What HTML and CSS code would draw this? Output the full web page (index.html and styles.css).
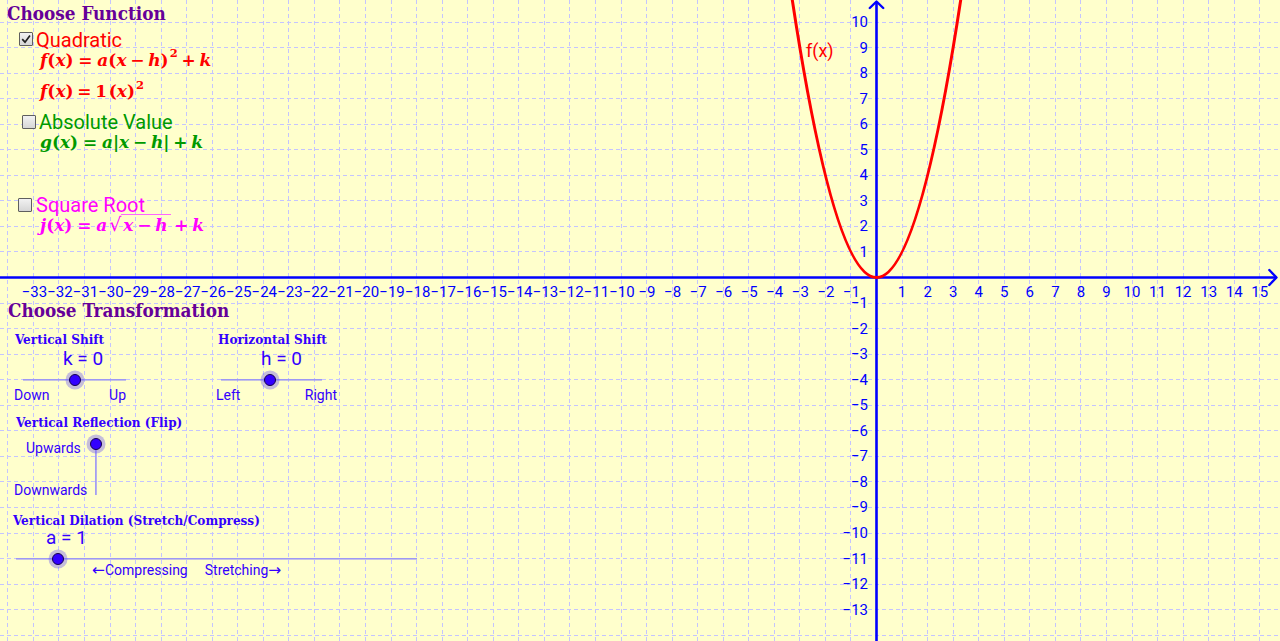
FILE: index.html
```html
<!DOCTYPE html>
<html>
<head>
<meta charset="utf-8">
<title>Transformations</title>
<link rel="stylesheet" href="styles.css">
</head>
<body>
<div class="applet">
  <svg class="graph" width="1280" height="641" viewBox="0 0 1280 641" xmlns="http://www.w3.org/2000/svg">
    <path class="grid" d="M7.8 0V641M33.35 0V641M58.9 0V641M84.45 0V641M110 0V641M135.55 0V641M161.1 0V641M186.65 0V641M212.2 0V641M237.75 0V641M263.3 0V641M288.85 0V641M314.4 0V641M339.95 0V641M365.5 0V641M391.05 0V641M416.6 0V641M442.15 0V641M467.7 0V641M493.25 0V641M518.8 0V641M544.35 0V641M569.9 0V641M595.45 0V641M621 0V641M646.55 0V641M672.1 0V641M697.65 0V641M723.2 0V641M748.75 0V641M774.3 0V641M799.85 0V641M825.4 0V641M850.95 0V641M902.05 0V641M927.6 0V641M953.15 0V641M978.7 0V641M1004.25 0V641M1029.8 0V641M1055.35 0V641M1080.9 0V641M1106.45 0V641M1132 0V641M1157.55 0V641M1183.1 0V641M1208.65 0V641M1234.2 0V641M1259.75 0V641"/>
    <path class="grid" d="M0 22H1280M0 47.55H1280M0 73.1H1280M0 98.65H1280M0 124.2H1280M0 149.75H1280M0 175.3H1280M0 200.85H1280M0 226.4H1280M0 251.95H1280M0 303.05H1280M0 328.6H1280M0 354.15H1280M0 379.7H1280M0 405.25H1280M0 430.8H1280M0 456.35H1280M0 481.9H1280M0 507.45H1280M0 533H1280M0 558.55H1280M0 584.1H1280M0 609.65H1280M0 635.2H1280"/>
    <g class="axis">
      <path d="M0 277.5H1276.5"/>
      <path d="M876.5 641V2"/>
      <path class="arrow" d="M1269.3 270L1276.5 277.5L1269.3 285"/>
      <path class="arrow" d="M869.8 8L876.5 1.5L883.2 8"/>
    </g>
    <g class="xlab">
      <text x="34.35" y="297">−33</text><text x="59.9" y="297">−32</text><text x="85.45" y="297">−31</text><text x="111" y="297">−30</text><text x="136.55" y="297">−29</text><text x="162.1" y="297">−28</text><text x="187.65" y="297">−27</text><text x="213.2" y="297">−26</text><text x="238.75" y="297">−25</text><text x="264.3" y="297">−24</text><text x="289.85" y="297">−23</text><text x="315.4" y="297">−22</text><text x="340.95" y="297">−21</text><text x="366.5" y="297">−20</text><text x="392.05" y="297">−19</text><text x="417.6" y="297">−18</text><text x="443.15" y="297">−17</text><text x="468.7" y="297">−16</text><text x="494.25" y="297">−15</text><text x="519.8" y="297">−14</text><text x="545.35" y="297">−13</text><text x="570.9" y="297">−12</text><text x="596.45" y="297">−11</text><text x="622" y="297">−10</text><text x="647.05" y="297">−9</text><text x="672.6" y="297">−8</text><text x="698.15" y="297">−7</text><text x="723.7" y="297">−6</text><text x="749.25" y="297">−5</text><text x="774.8" y="297">−4</text><text x="800.35" y="297">−3</text><text x="825.9" y="297">−2</text><text x="851.45" y="297">−1</text>
      <text x="902.05" y="297">1</text><text x="927.6" y="297">2</text><text x="953.15" y="297">3</text><text x="978.7" y="297">4</text><text x="1004.25" y="297">5</text><text x="1029.8" y="297">6</text><text x="1055.35" y="297">7</text><text x="1080.9" y="297">8</text><text x="1106.45" y="297">9</text><text x="1132" y="297">10</text><text x="1157.55" y="297">11</text><text x="1183.1" y="297">12</text><text x="1208.65" y="297">13</text><text x="1234.2" y="297">14</text><text x="1259.75" y="297">15</text>
    </g>
    <g class="ylab">
      <text x="868" y="27">10</text><text x="868" y="52.55">9</text><text x="868" y="78.1">8</text><text x="868" y="103.65">7</text><text x="868" y="129.2">6</text><text x="868" y="154.75">5</text><text x="868" y="180.3">4</text><text x="868" y="205.85">3</text><text x="868" y="231.4">2</text><text x="868" y="256.95">1</text>
      <text x="868" y="308.05">−1</text><text x="868" y="333.6">−2</text><text x="868" y="359.15">−3</text><text x="868" y="384.7">−4</text><text x="868" y="410.25">−5</text><text x="868" y="435.8">−6</text><text x="868" y="461.35">−7</text><text x="868" y="486.9">−8</text><text x="868" y="512.45">−9</text><text x="868" y="538">−10</text><text x="868" y="563.55">−11</text><text x="868" y="589.1">−12</text><text x="868" y="614.65">−13</text>
    </g>
    <path class="curve" d="M790.91 -9.2Q876.5 564.2 962.09 -9.2"/>
    <text class="curve-label" x="806" y="57">f(x)</text>
  </svg>

  <div class="panel">
    <div class="title t1">Choose Function</div>

    <div class="fn-row r-quad">
      <span class="cb"><svg width="14" height="14" viewBox="0 0 14 14"><path d="M3.2 7.2L6 10.2L11 3.4" fill="none" stroke="#222" stroke-width="1.7"/></svg></span>
      <span class="fn-name red">Quadratic</span>
    </div>
    <div class="formula red f1"><i>f</i>(<i>x</i>)<span class="rel">=</span><i>a</i>(<i>x</i><span class="bin">−</span><i>h</i>)<span class="sup">2</span><span class="bin">+</span><i>k</i></div>
    <div class="formula red f2"><i>f</i>(<i>x</i>)<span class="rel">=</span>1<span class="thin"></span>(<i>x</i>)<span class="sup">2</span></div>

    <div class="fn-row r-abs">
      <span class="cb"></span>
      <span class="fn-name green">Absolute Value</span>
    </div>
    <div class="formula green f3"><i>g</i>(<i>x</i>)<span class="rel">=</span><i>a</i>|<i>x</i><span class="bin">−</span><i>h</i>|<span class="bin">+</span><i>k</i></div>

    <div class="fn-row r-sqrt">
      <span class="cb"></span>
      <span class="fn-name magenta">Square Root</span>
    </div>
    <div class="formula magenta f4"><i>j</i>(<i>x</i>)<span class="rel">=</span><i>a</i><span class="radic">√</span><span class="rad"><i>x</i><span class="bin">−</span><i>h</i></span><span class="bin">+</span><i>k</i></div>

    <div class="title t2">Choose Transformation</div>

    <div class="shifts">
      <div class="slider s-k">
        <div class="s-head">Vertical Shift</div>
        <div class="s-val">k = 0</div>
        <div class="s-track"><span class="knob"></span></div>
        <div class="s-ends"><span>Down</span><span>Up</span></div>
      </div>
      <div class="slider s-h">
        <div class="s-head">Horizontal Shift</div>
        <div class="s-val">h = 0</div>
        <div class="s-track"><span class="knob"></span></div>
        <div class="s-ends"><span>Left</span><span>Right</span></div>
      </div>
    </div>

    <div class="s-head flip-head">Vertical Reflection (Flip)</div>
    <div class="flip">
      <div class="flip-labels">
        <div class="s-lbl up">Upwards</div>
        <div class="s-lbl">Downwards</div>
      </div>
      <div class="vtrack"><span class="knob"></span></div>
    </div>

    <div class="s-head dil-head">Vertical Dilation (Stretch/Compress)</div>
    <div class="s-val dil-val">a = 1</div>
    <div class="s-track dil-track"><span class="knob"></span></div>
    <div class="dil-ends"><span><span class="arr">←</span>Compressing</span><span class="stretch">Stretching<span class="arr">→</span></span></div>
  </div>
</div>
</body>
</html>
```

FILE: styles.css
```css
html, body {
  margin: 0;
  padding: 0;
  background: #ffffcc;
}

.applet {
  position: relative;
  width: 1280px;
  height: 641px;
  overflow: hidden;
  background: #ffffcc;
  font-family: Roboto, "Liberation Sans", sans-serif;
}

.graph {
  position: absolute;
  left: 0;
  top: 0;
  display: block;
}

.grid {
  fill: none;
  stroke: #c4c4ff;
  stroke-width: 1;
  stroke-dasharray: 4 3;
  shape-rendering: crispEdges;
}

.axis path {
  fill: none;
  stroke: #0000ff;
  stroke-width: 2.6;
}

.axis .arrow {
  stroke-width: 2.4;
  stroke-linecap: round;
  stroke-linejoin: round;
}

.xlab text, .ylab text {
  font-family: Roboto, "Liberation Sans", sans-serif;
  font-size: 15px;
  fill: #0000ff;
}

.xlab text { text-anchor: middle; }
.ylab text { text-anchor: end; }

.curve {
  fill: none;
  stroke: #ff0000;
  stroke-width: 3;
}

.curve-label {
  font-family: Roboto, "Liberation Sans", sans-serif;
  font-size: 18px;
  fill: #ff0000;
}

/* ---------- left panel ---------- */
.panel {
  position: absolute;
  left: 0;
  top: 0;
  width: 440px;
}

.panel > div {
  white-space: nowrap;
}

.title {
  font-family: "DejaVu Serif Condensed", "DejaVu Serif", serif;
  font-weight: bold;
  font-size: 18.8px;
  color: #660099;
  height: 26px;
  line-height: 26px;
}

.t1 { padding-left: 7px; }
.t2 { padding-left: 8px; margin-top: 63.2px; }

.fn-row {
  display: flex;
  align-items: center;
}

.fn-name {
  font-size: 20px;
}

.cb {
  box-sizing: border-box;
  width: 14px;
  height: 14px;
  border: 1.5px solid #5f5f5f;
  background: linear-gradient(#f2f2f2, #d6d6d6);
  border-radius: 1px;
  position: relative;
  flex: none;
}

.cb svg {
  position: absolute;
  left: -1.5px;
  top: -1.5px;
}

.r-quad { height: 28px; padding-left: 19px; }
.r-quad .fn-name { line-height: 28px; margin-left: 3px; }
.r-quad .cb { top: -1px; }

.r-abs { height: 20px; margin-top: 11px; padding-left: 22px; }
.r-abs .fn-name { line-height: 20px; margin-left: 3px; }
.r-abs .cb { top: -0.5px; }

.r-sqrt { height: 14px; margin-top: 45.7px; padding-left: 18px; }
.r-sqrt .fn-name { line-height: 14px; margin-left: 4px; }

.red { color: #ff0000; }
.green { color: #009900; }
.magenta { color: #ff00ff; }

.formula {
  font-family: "DejaVu Serif", serif;
  font-weight: bold;
  font-size: 17px;
  padding-left: 40px;
  height: 20px;
  line-height: 20px;
}

.formula i { font-style: italic; }

.rel { margin: 0 0.28em; }
.bin { margin: 0 0.22em; }
.thin { display: inline-block; width: 0.1em; }

.sup {
  font-size: 11.5px;
  position: relative;
  top: -0.75em;
  margin-left: 1px;
}

.f2 .rel { margin: 0 0.22em; }

.radic {
  font-size: 19px;
  margin-left: 2px;
  font-weight: normal;
}

.rad {
  border-top: 1px solid #ff66ff;
  padding: 0 3px 0 2px;
}

.f1 { height: 12px; line-height: 12px; }
.f2 { margin-top: 15.2px; }
.f3 { margin-top: 0; }
.f4 { margin-top: 2.3px; }

/* ---------- sliders ---------- */
.shifts {
  display: flex;
  margin-top: 5.8px;
  padding-left: 14px;
}

.slider { display: flex; flex-direction: column; }
.s-k { width: 202px; }

.s-head {
  font-family: "DejaVu Serif Condensed", "DejaVu Serif", serif;
  font-weight: bold;
  font-size: 13.4px;
  color: #3300ff;
  height: 20px;
  line-height: 20px;
  white-space: nowrap;
}

.s-val {
  font-size: 19px;
  color: #3300ff;
  height: 20.6px;
  line-height: 20.6px;
}

.s-track {
  position: relative;
  height: 14px;
  margin-top: 3.2px;
  background: linear-gradient(#9d98f5, #9d98f5) left center / 100% 1.6px no-repeat;
}

.knob {
  position: absolute;
  box-sizing: border-box;
  width: 12px;
  height: 12px;
  margin: -6px 0 0 -6px;
  border-radius: 50%;
  background: #3300ff;
  border: 1px solid #15004d;
  box-shadow: 0 0 0 3.5px rgba(110, 90, 240, 0.4);
}

.s-track .knob { top: 50%; }

.s-ends {
  display: flex;
  justify-content: space-between;
  height: 16px;
  line-height: 16px;
  margin-top: 0.2px;
  font-size: 14px;
  color: #3300ff;
}

.s-k .s-head { padding-left: 1px; }
.s-k .s-val { padding-left: 49px; }
.s-k .s-track { margin-left: 9px; width: 103px; }
.s-k .s-track .knob { left: 52px; }
.s-k .s-ends { width: 112px; }

.s-h .s-head { padding-left: 2px; }
.s-h .s-val { padding-left: 45px; }
.s-h .s-track { margin-left: 4.7px; width: 101px; }
.s-h .s-track .knob { left: 49.3px; }
.s-h .s-ends { width: 121px; }

.flip-head { margin-top: 8.7px; padding-left: 16px; }

.flip {
  display: flex;
  margin-top: 8px;
  padding-left: 14px;
}

.flip-labels {
  width: 74.7px;
  height: 58.3px;
  display: flex;
  flex-direction: column;
  justify-content: space-between;
}

.s-lbl {
  font-size: 14px;
  color: #3300ff;
  height: 16px;
  line-height: 16px;
}

.s-lbl.up { padding-left: 12px; }

.vtrack {
  position: relative;
  width: 14px;
  height: 51px;
  margin-top: 4.1px;
  background: linear-gradient(#a49ef2, #a49ef2) center top / 1.8px 100% no-repeat;
}

.vtrack .knob { left: 50%; top: 0.3px; }

.dil-head { height: 18px; line-height: 18px; margin-top: 13px; padding-left: 13px; }
.dil-val { height: 18px; line-height: 18px; margin-top: 0.3px; padding-left: 46px; }

.dil-track {
  height: 10px;
  margin-top: 6.8px;
  margin-left: 16px;
  width: 401px;
}

.dil-track .knob { left: 41.7px; }

.dil-ends {
  display: flex;
  height: 12px;
  line-height: 12px;
  padding-left: 92px;
  font-size: 14px;
  color: #3300ff;
}

.arr {
  font-family: "DejaVu Sans", sans-serif;
  font-size: 15.5px;
}

.dil-ends .stretch { margin-left: 17px; }
```
